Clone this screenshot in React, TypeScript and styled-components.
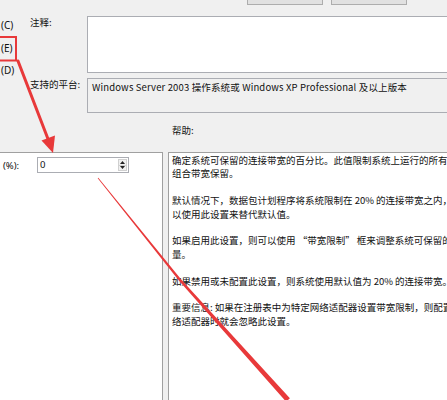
import styled, { createGlobalStyle } from "styled-components";

const GlobalStyle = createGlobalStyle`
  html, body {
    margin: 0;
    padding: 0;
    background: #f0f0f0;
    overflow: hidden;
  }
  body {
    font-family: "Noto Sans CJK SC", "Noto Sans", sans-serif;
    color: #111;
  }
`;

const helpParagraphs = [
  ["确定系统可保留的连接带宽的百分比。此值限制系统上运行的所有程序的", "组合带宽保留。"],
  ["默认情况下，数据包计划程序将系统限制在 20% 的连接带宽之内，但你可", "以使用此设置来替代默认值。"],
  ["如果启用此设置，则可以使用 “带宽限制” 框来调整系统可保留的带宽", "量。"],
  ["如果禁用或未配置此设置，则系统使用默认值为 20% 的连接带宽。"],
  ["重要信息: 如果在注册表中为特定网络适配器设置带宽限制，则配置该网", "络适配器时就会忽略此设置。"],
];

export default function App() {
  return (
    <Page>
      <GlobalStyle />
      <ButtonBar>
        <DialogButton />
        <DialogButton />
      </ButtonBar>

      <Upper>
        <RadioColumn>
          <RadioLabel>(C)</RadioLabel>
          <RadioLabel>(E)</RadioLabel>
          <RadioLabel>(D)</RadioLabel>
        </RadioColumn>
        <FormGrid>
          <FieldLabel>注释:</FieldLabel>
          <CommentBox />
          <FieldLabel>支持的平台:</FieldLabel>
          <ReadOnlyBox>Windows Server 2003 操作系统或 Windows XP Professional 及以上版本</ReadOnlyBox>
        </FormGrid>
      </Upper>

      <HelpHeader>帮助:</HelpHeader>

      <Panels>
        <OptionsPanel>
          <OptionRow>
            <OptionLabel>(%):</OptionLabel>
            <SpinBox>
              <SpinValue>0</SpinValue>
              <SpinButtons>
                <SpinButton>
                  <svg width="5" height="3" viewBox="0 0 5 3">
                    <polygon points="2.5,0 5,3 0,3" fill="#222" />
                  </svg>
                </SpinButton>
                <SpinButton>
                  <svg width="5" height="3" viewBox="0 0 5 3">
                    <polygon points="0,0 5,0 2.5,3" fill="#222" />
                  </svg>
                </SpinButton>
              </SpinButtons>
            </SpinBox>
          </OptionRow>
        </OptionsPanel>
        <HelpPanel>
          {helpParagraphs.map((lines, i) => (
            <HelpParagraph key={i}>
              {lines.map((line, j) => (
                <HelpLine key={j}>{line}</HelpLine>
              ))}
            </HelpParagraph>
          ))}
        </HelpPanel>
      </Panels>

      <Annotations width="447" height="400" viewBox="0 0 447 400">
        <rect x="-1" y="37" width="17" height="23.5" fill="none" stroke="#e8393a" strokeWidth="2" />
        <line x1="18" y1="61" x2="48" y2="139" stroke="#e8393a" strokeWidth="3" strokeLinecap="round" />
        <polygon points="53,153 41.5,140.5 55,135.5" fill="#e8393a" />
        <polygon
          points="98.3,177.8 181,279.2 289.9,398.3 286.1,401.7 179,280.8 97.7,178.2"
          fill="#e8393a"
        />
      </Annotations>
    </Page>
  );
}

const Page = styled.div`
  position: relative;
  width: 447px;
  height: 400px;
  overflow: hidden;
  background: #f0f0f0;
  font-size: 9.5px;
`;

const ButtonBar = styled.div`
  display: flex;
  align-items: flex-end;
  gap: 8px;
  height: 5px;
  padding-left: 247px;
  overflow: hidden;
`;

const DialogButton = styled.div`
  flex: none;
  width: 76px;
  height: 22px;
  box-sizing: border-box;
  background: #e1e1e1;
  border: 1px solid #adadad;
`;

const Upper = styled.div`
  display: flex;
  margin-top: 11px;
  width: 560px;
`;

const RadioColumn = styled.div`
  flex: none;
  width: 30px;
  display: flex;
  flex-direction: column;
  gap: 10.5px;
  padding-top: 3px;
`;

const RadioLabel = styled.div`
  font-family: "Noto Sans", sans-serif;
  font-size: 10px;
  line-height: 12px;
  padding-left: 1px;
`;

const FormGrid = styled.div`
  flex: 1;
  display: grid;
  grid-template-columns: 57px 1fr;
  grid-template-rows: 57px 35px;
  row-gap: 5px;
`;

const FieldLabel = styled.div`
  line-height: 10px;
  padding-top: 1px;
`;

const CommentBox = styled.div`
  box-sizing: border-box;
  background: #fff;
  border: 1px solid #abadb3;
`;

const ReadOnlyBox = styled.div`
  box-sizing: border-box;
  background: #f0f0f0;
  border: 1px solid #abadb3;
  padding: 2px 4px;
  line-height: 13px;
  letter-spacing: 0.15px;
  white-space: nowrap;
`;

const HelpHeader = styled.div`
  height: 39px;
  box-sizing: border-box;
  padding: 11px 0 0 172px;
  line-height: 13px;
`;

const Panels = styled.div`
  display: flex;
  gap: 5px;
  width: 640px;
  height: 260px;
`;

const OptionsPanel = styled.div`
  flex: none;
  width: 164px;
  box-sizing: border-box;
  margin-left: -1px;
  background: #fff;
  border: 1px solid #a0a0a0;
  border-bottom: none;
  padding: 4px 0 0 3px;
`;

const OptionRow = styled.div`
  display: flex;
  align-items: center;
  height: 16px;
`;

const OptionLabel = styled.div`
  width: 34px;
  font-family: "Noto Sans", sans-serif;
  font-size: 9.5px;
`;

const SpinBox = styled.div`
  display: flex;
  width: 92px;
  height: 16px;
  box-sizing: border-box;
  border: 1px solid #abadb3;
  background: #fff;
`;

const SpinValue = styled.div`
  flex: 1;
  font-family: "Noto Sans", sans-serif;
  font-size: 9.5px;
  line-height: 14px;
  padding-left: 2px;
`;

const SpinButtons = styled.div`
  display: flex;
  flex-direction: column;
  width: 9px;
  margin: 1px 1px 1px 0;
`;

const SpinButton = styled.div`
  flex: 1;
  display: flex;
  align-items: center;
  justify-content: center;
  background: #f0f0f0;
  border: 1px solid #d0d0d0;
  & + & {
    border-top: none;
  }
`;

const HelpPanel = styled.div`
  flex: 1;
  box-sizing: border-box;
  background: #fff;
  border: 1px solid #a0a0a0;
  border-bottom: none;
  padding: 1px 0 0 3px;
`;

const HelpParagraph = styled.div`
  margin-bottom: 13.4px;
`;

const HelpLine = styled.div`
  white-space: nowrap;
  line-height: 13.4px;
`;

const Annotations = styled.svg`
  position: absolute;
  top: 0;
  left: 0;
  pointer-events: none;
`;
